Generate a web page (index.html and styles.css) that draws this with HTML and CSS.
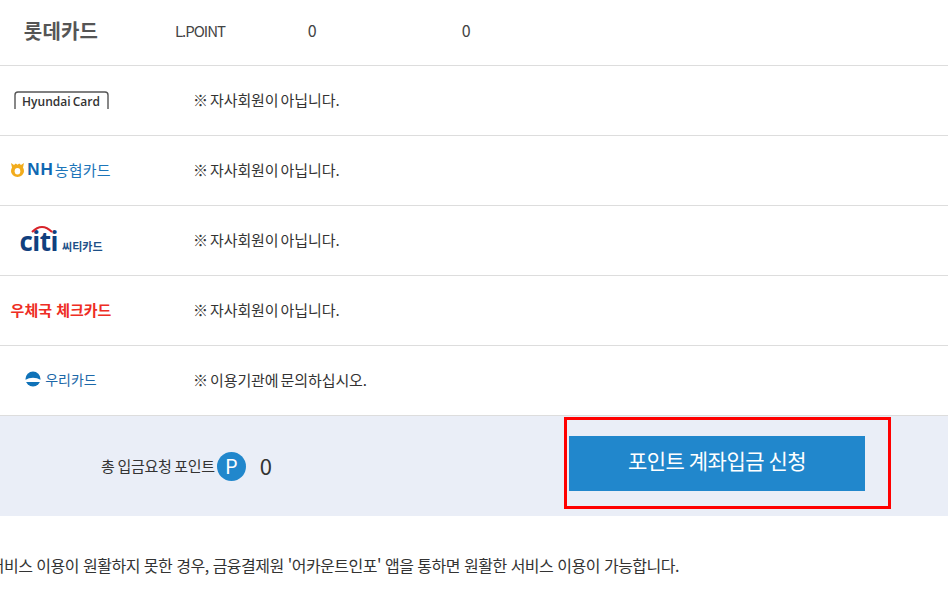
FILE: index.html
```html
<!DOCTYPE html>
<html lang="ko">
<head>
    <meta charset="UTF-8">
    <title>포인트 계좌입금 신청</title>
    <link rel="stylesheet" href="styles.css">
</head>
<body>
    <div class="card-list">
        <div class="card-row first">
            <div class="logo"><span class="logo-lotte">롯데카드</span></div>
            <div class="point-name">L.POINT</div>
            <div class="point-num">0</div>
            <div class="point-num">0</div>
        </div>
        <div class="card-row">
            <div class="logo">
                <span class="logo-hyundai">
                    <svg class="hyundai-frame" width="95" height="19" viewBox="0 0 95 19"><path d="M1 18V4Q1 1 4 1H91Q94 1 94 4V18" fill="none" stroke="#555" stroke-width="1.4"/></svg>
                    Hyundai Card
                </span>
            </div>
            <div class="note">※ 자사회원이 아닙니다.</div>
        </div>
        <div class="card-row">
            <div class="logo">
                <span class="logo-nh">
                    <svg width="13" height="14" viewBox="0 0 13 14"><path d="M0 0L3 2L4.8 .4L6.5 1.8L8.2 .4L10 2L13 0L12 4.4Q13 6 13 8.2A6.5 5.8 0 0 1 0 8.2Q0 6 1 4.4Z" fill="#f2ac1c"/><ellipse cx="6.5" cy="8.2" rx="2.8" ry="3.2" fill="#fff"/></svg>
                    <b>NH</b><span class="nh-name">농협카드</span>
                </span>
            </div>
            <div class="note">※ 자사회원이 아닙니다.</div>
        </div>
        <div class="card-row">
            <div class="logo">
                <span class="logo-citi">
                    <svg class="citi-arc" width="22" height="8" viewBox="0 0 22 8"><path d="M1 7Q11 -3 21 7" fill="none" stroke="#d8232a" stroke-width="2"/></svg>
                    <b>citi</b><span class="citi-name">씨티카드</span>
                </span>
            </div>
            <div class="note">※ 자사회원이 아닙니다.</div>
        </div>
        <div class="card-row">
            <div class="logo"><span class="logo-post">우체국 체크카드</span></div>
            <div class="note">※ 자사회원이 아닙니다.</div>
        </div>
        <div class="card-row">
            <div class="logo">
                <span class="logo-woori">
                    <svg width="16" height="16" viewBox="0 0 16 16"><circle cx="8" cy="8" r="7.5" fill="#0f72b8"/><path d="M0 9Q8 4.5 16 9V11H0Z" fill="#fff"/></svg>
                    우리카드
                </span>
            </div>
            <div class="note">※ 이용기관에 문의하십시오.</div>
        </div>
    </div>

    <div class="total-bar">
        <div class="total">
            <span class="total-label">총 입금요청 포인트</span>
            <span class="point-badge">P</span>
            <span class="total-num">0</span>
        </div>
        <button class="apply-btn">포인트 계좌입금 신청</button>
        <div class="highlight"></div>
    </div>

    <div class="notice">
        <p>서비스 이용이 원활하지 못한 경우, 금융결제원 '어카운트인포' 앱을 통하면 원활한 서비스 이용이 가능합니다.</p>
    </div>
</body>
</html>
```

FILE: styles.css
```css
* {
    margin: 0;
    padding: 0;
    box-sizing: border-box;
}
body {
    font-family: 'Noto Sans CJK KR', 'Noto Sans', sans-serif;
    background-color: #ffffff;
    color: #333;
    font-size: 14px;
    letter-spacing: -0.5px;
    overflow: hidden;
}

/* Card rows */
.card-row {
    display: grid;
    grid-template-columns: 122px 156px 68px 240px;
    align-items: center;
    height: 70px;
    padding-bottom: 2px;
    border-bottom: 1px solid #ddd;
}
.card-row.first {
    height: 66px;
    padding-bottom: 5px;
}
.logo {
    display: flex;
    justify-content: center;
    align-items: center;
}
.point-name,
.point-num {
    text-align: center;
    color: #444;
}
.point-name {
    font-size: 15px;
    letter-spacing: -1px;
}
.point-num {
    font-size: 16px;
}
.note {
    grid-column: 2 / 5;
    padding-left: 71px;
    font-size: 15px;
    letter-spacing: -0.1px;
    word-spacing: -2px;
}

/* Logos */
.logo-lotte {
    font-size: 20px;
    font-weight: bold;
    color: #555;
    letter-spacing: 0.2px;
}
.logo-hyundai {
    position: relative;
    top: 1px;
    width: 95px;
    height: 19px;
    font-family: 'Open Sans', sans-serif;
    font-size: 12px;
    font-weight: 600;
    line-height: 21px;
    text-align: center;
    color: #333;
    letter-spacing: 0;
    word-spacing: -1px;
    white-space: nowrap;
}
.hyundai-frame {
    position: absolute;
    top: 0;
    left: 0;
}
.logo-nh {
    display: flex;
    align-items: center;
    gap: 3px;
    color: #1c75b9;
    letter-spacing: 0.2px;
}
.logo-nh b {
    font-family: 'Liberation Sans', sans-serif;
    font-size: 17px;
    letter-spacing: 1px;
    color: #0f68b2;
}
.nh-name {
    font-size: 15px;
    margin-left: -2px;
}
.logo-citi {
    position: relative;
    display: flex;
    align-items: baseline;
    gap: 4px;
    color: #1d4f86;
    letter-spacing: 0;
    padding-top: 4px;
}
.logo-citi b {
    font-family: 'Open Sans', sans-serif;
    font-size: 26px;
    font-weight: 700;
    line-height: 22px;
    letter-spacing: -0.5px;
    color: #10407e;
}
.citi-arc {
    position: absolute;
    top: -1px;
    left: 12px;
}
.citi-name {
    font-size: 11px;
    font-weight: bold;
}
.logo-post {
    font-size: 15px;
    font-weight: bold;
    color: #ee2d24;
    white-space: nowrap;
    letter-spacing: 0;
}
.logo-woori {
    display: flex;
    align-items: center;
    gap: 4px;
    color: #1c68a8;
    letter-spacing: 0;
    position: relative;
    top: -1px;
}

/* Total bar */
.total-bar {
    position: relative;
    display: flex;
    justify-content: space-between;
    align-items: center;
    height: 100px;
    padding: 0 83px 0 101px;
    background-color: #eaeef7;
}
.total {
    display: flex;
    align-items: center;
}
.total-label {
    margin-right: 2px;
    font-size: 15px;
    position: relative;
    top: -1px;
    letter-spacing: -0.3px;
    word-spacing: -1px;
}
.point-badge {
    width: 29px;
    height: 29px;
    border-radius: 50%;
    background-color: #2187cc;
    color: #ffffff;
    font-size: 20px;
    line-height: 27px;
    text-align: center;
    letter-spacing: 0;
}
.total-num {
    margin-left: 14px;
    font-size: 22px;
    line-height: 26px;
    letter-spacing: 0;
    position: relative;
    top: -1px;
}
.apply-btn {
    align-self: flex-start;
    width: 296px;
    height: 55px;
    margin-top: 20px;
    padding-bottom: 7px;
    border: none;
    background-color: #2187cc;
    color: #ffffff;
    font-family: inherit;
    font-size: 21px;
    letter-spacing: -0.5px;
    word-spacing: -1px;
}
.highlight {
    position: absolute;
    top: 1px;
    left: 564px;
    width: 327px;
    height: 92px;
    border: 3px solid #ff0000;
}

/* Bottom notice */
.notice {
    display: flex;
    justify-content: flex-end;
    padding: 37px 269px 0 0;
    white-space: nowrap;
    font-size: 16px;
}
```
